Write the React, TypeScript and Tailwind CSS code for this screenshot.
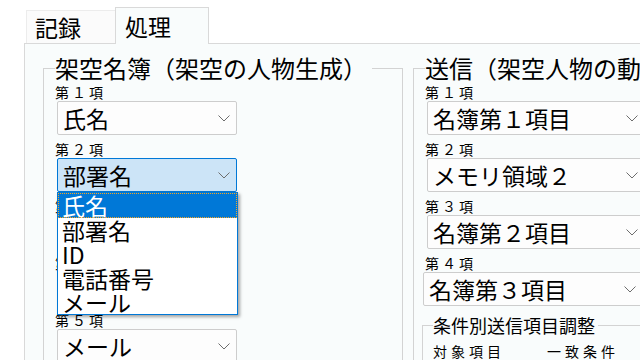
import React from "react";

const Chevron = () => (
  <svg width="12" height="7" viewBox="0 0 12 7" className="shrink-0">
    <path d="M0.5 0.5 L6 6 L11.5 0.5" fill="none" stroke="#6d6d6d" strokeWidth="1" />
  </svg>
);

function Combo({ text, cls, hideText }: { text: string; cls: string; hideText?: boolean }) {
  return (
    <div
      className={`h-[34px] flex items-center justify-between pl-[5px] pr-[6px] rounded-[2px] border text-[23px] leading-[30px] whitespace-nowrap ${cls}`}
    >
      <span className={hideText ? "invisible" : ""}>{text}</span>
      <Chevron />
    </div>
  );
}

function Label({ text }: { text: string }) {
  return <div className="h-[17px] text-[14px] leading-[17px] tracking-[3px] whitespace-nowrap">{text}</div>;
}

const normal = "bg-[#fdfdfd] border-[#cdcdcd]";
const active = "bg-[#cce4f7] border-[#0078d7]";

export default function App() {
  return (
    <div className="w-[640px] h-[360px] overflow-hidden bg-white text-black font-['Noto_Sans_CJK_JP',sans-serif]">
      {/* tab strip */}
      <div className="flex items-end h-[43px] pl-[26px]">
        <div className="w-[89px] h-[33px] border-l border-t border-[#ececec] bg-[#fbfbfb] pl-[8px] text-[23px] leading-[32px]">
          記録
        </div>
        <div className="relative z-10 -mb-px w-[94px] h-[37px] border-l border-t border-r border-[#d9d9d9] bg-[#f9fcfc] pl-[9px] text-[23px] leading-[36px]">
          処理
        </div>
      </div>
      {/* panel */}
      <div className="ml-[24px] h-[317px] border-l border-t border-[#d9d9d9] bg-[#f9fcfc] pt-[11px] flex items-start overflow-hidden">
        <fieldset className="shrink-0 w-[360px] ml-[18px] border border-[#d3d3d3] pl-[11px] pt-[3px]">
          <legend className="text-[24px] leading-[26px] pr-[5px] whitespace-nowrap">架空名簿（架空の人物生成）</legend>
          <div className="pb-[6px]">
            <Label text="第１項" />
            <div className="ml-[2px]">
              <Combo text="氏名" cls={`w-[180px] ${normal}`} />
            </div>
          </div>
          <div className="pb-[6px]">
            <Label text="第２項" />
            <div className="ml-[2px] relative z-20">
              <Combo text="部署名" cls={`w-[180px] ${active}`} />
              <div className="absolute left-0 top-full w-[181px] border border-[#0078d7] bg-white shadow-[2px_2px_3px_rgba(0,0,0,0.35)] text-[23px] leading-[24px]">
                <div className="h-[25px] bg-[#0078d7] text-white outline-1 outline-dotted outline-[#f5a623] -outline-offset-1 pl-[4px]">
                  氏名
                </div>
                <div className="h-[24px] pl-[4px]">部署名</div>
                <div className="h-[24px] pl-[4px]">ID</div>
                <div className="h-[24px] pl-[4px]">電話番号</div>
                <div className="h-[24px] pl-[4px]">メール</div>
              </div>
            </div>
          </div>
          <div className="pb-[6px]">
            <Label text="第３項" />
            <div className="ml-[2px]">
              <Combo text="ID" hideText cls={`w-[180px] ${normal}`} />
            </div>
          </div>
          <div className="pb-[6px]">
            <Label text="第４項" />
            <div className="ml-[2px]">
              <Combo text="電話番号" hideText cls={`w-[180px] ${normal}`} />
            </div>
          </div>
          <div className="pb-[6px]">
            <Label text="第５項" />
            <div className="ml-[2px]">
              <Combo text="メール" cls={`w-[180px] ${normal}`} />
            </div>
          </div>
        </fieldset>

        <fieldset className="shrink-0 w-[340px] ml-[10px] border border-[#d3d3d3] pl-[11px] pt-[3px]">
          <legend className="text-[24px] leading-[26px] pr-[5px] whitespace-nowrap">送信（架空人物の動作設定）</legend>
          <div className="pb-[6px]">
            <Label text="第１項" />
            <div className="ml-[2px]">
              <Combo text="名簿第１項目" cls={`w-[218px] ${normal}`} />
            </div>
          </div>
          <div className="pb-[6px]">
            <Label text="第２項" />
            <div className="ml-[2px]">
              <Combo text="メモリ領域２" cls={`w-[218px] ${normal}`} />
            </div>
          </div>
          <div className="pb-[6px]">
            <Label text="第３項" />
            <div className="ml-[2px]">
              <Combo text="名簿第２項目" cls={`w-[218px] ${normal}`} />
            </div>
          </div>
          <div>
            <Label text="第４項" />
            <div className="-ml-[2px]">
              <Combo text="名簿第３項目" cls={`w-[220px] ${normal}`} />
            </div>
          </div>
          <fieldset className="mt-[9px] -ml-[3px] w-[300px] border border-[#d3d3d3] pl-[10px] pt-[8px] pb-[20px]">
            <legend className="text-[18px] leading-[20px] pr-[3px] whitespace-nowrap">条件別送信項目調整</legend>
            <div className="flex text-[14px] leading-[17px] tracking-[4px] whitespace-nowrap">
              <div className="w-[114px]">対象項目</div>
              <div>一致条件</div>
            </div>
          </fieldset>
        </fieldset>
      </div>
    </div>
  );
}
